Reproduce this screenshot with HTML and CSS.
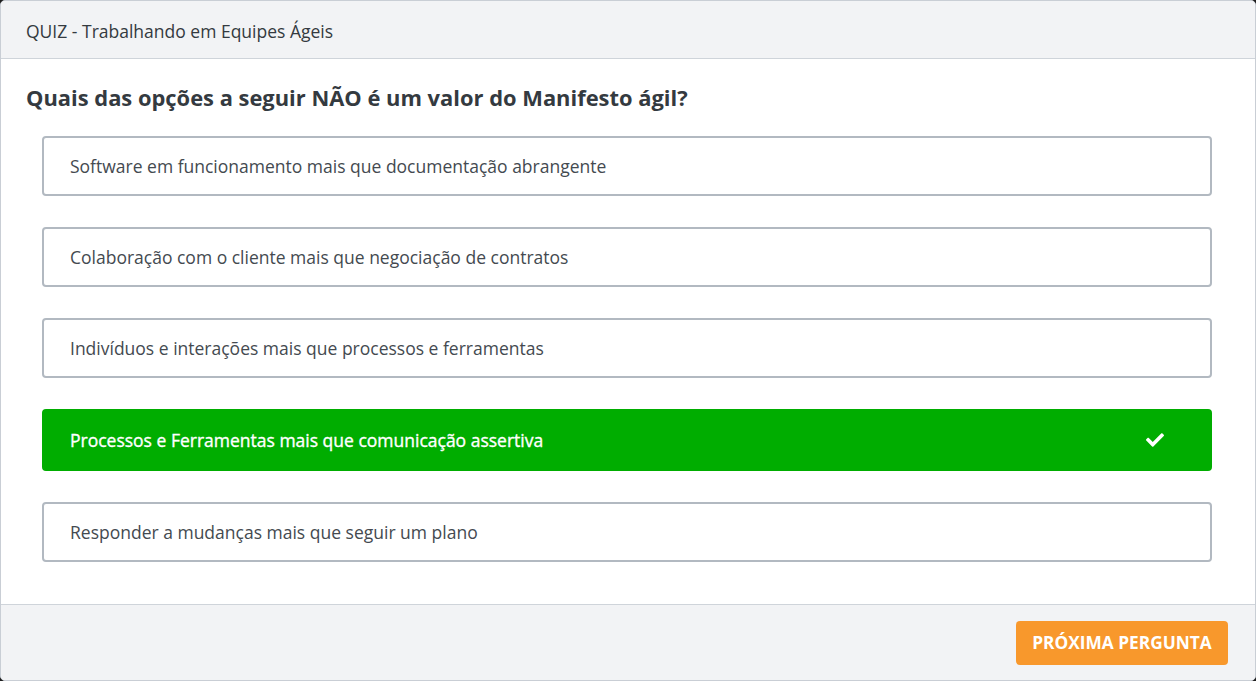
FILE: index.html
```html
<!DOCTYPE html>
<html lang="pt">
<head>
<meta charset="utf-8">
<title>Quiz</title>
<link rel="stylesheet" href="styles.css">
</head>
<body>
<div class="card">
  <div class="card-header">QUIZ - Trabalhando em Equipes Ágeis</div>
  <div class="card-body">
    <h2 class="question">Quais das opções a seguir NÃO é um valor do Manifesto ágil?</h2>
    <ul class="options">
      <li class="option">Software em funcionamento mais que documentação abrangente</li>
      <li class="option">Colaboração com o cliente mais que negociação de contratos</li>
      <li class="option">Indivíduos e interações mais que processos e ferramentas</li>
      <li class="option option-correct">
        <span>Processos e Ferramentas mais que comunicação assertiva</span>
        <svg class="check" viewBox="0 0 512 512" width="18" height="18" aria-hidden="true"><path fill="#fff" d="M173.9 439.4l-166.4-166.4c-10-10-10-26.2 0-36.2l36.2-36.2c10-10 26.2-10 36.2 0L192 312.7 432.1 72.6c10-10 26.2-10 36.2 0l36.2 36.2c10 10 10 26.2 0 36.2l-294.4 294.4c-10 10-26.2 10-36.2 0z"/></svg>
      </li>
      <li class="option">Responder a mudanças mais que seguir um plano</li>
    </ul>
  </div>
  <div class="card-footer">
    <button class="btn-next">PRÓXIMA PERGUNTA</button>
  </div>
</div>
</body>
</html>
```
FILE: styles.css
```css
html, body {
  margin: 0;
  padding: 0;
  background: #1e1e1e;
  height: 100%;
}
body {
  font-family: "Open Sans", "Liberation Sans", sans-serif;
  color: #343a40;
}
.card {
  box-sizing: border-box;
  width: 1256px;
  height: 681px;
  background: #fff;
  border: 1px solid #c9ced5;
  border-radius: 5px;
  overflow: hidden;
  display: flex;
  flex-direction: column;
}
.card-header {
  box-sizing: border-box;
  height: 58px;
  background: #f2f3f5;
  border-bottom: 1px solid #cfd4da;
  padding: 17px 25px 0;
  font-size: 17.5px;
  line-height: 26px;
  color: #343a40;
}
.card-body {
  flex: 1;
  padding: 24px 43px 0 25px;
}
.question {
  margin: 0 0 23px;
  font-size: 21.9px;
  line-height: 30px;
  font-weight: 700;
  color: #343a40;
}
.options {
  list-style: none;
  margin: 0;
  padding: 0 0 0 16px;
  display: flex;
  flex-direction: column;
  gap: 31px;
}
.option {
  box-sizing: border-box;
  height: 60px;
  border: 2px solid #b2b9c1;
  border-radius: 4px;
  padding: 0 26px;
  display: flex;
  align-items: center;
  justify-content: space-between;
  font-size: 17.5px;
  color: #444a50;
}
.option-correct {
  height: 62px;
  background: #00ad00;
  border-color: #00ad00;
  color: #fff;
  font-weight: 400;
  -webkit-text-stroke: 0.35px #fff;
  padding-right: 46px;
}
.check {
  display: block;
}
.card-footer {
  box-sizing: border-box;
  height: 76px;
  background: #f2f3f5;
  border-top: 1px solid #cfd4da;
  display: flex;
  justify-content: flex-end;
  align-items: center;
  padding: 0 27px 0 0;
}
.btn-next {
  width: 212px;
  height: 44px;
  background: #f8982c;
  border: none;
  border-radius: 4px;
  color: #fff;
  font-family: "Open Sans", "Liberation Sans", sans-serif;
  font-weight: 700;
  font-size: 17.3px;
  cursor: pointer;
}
```
